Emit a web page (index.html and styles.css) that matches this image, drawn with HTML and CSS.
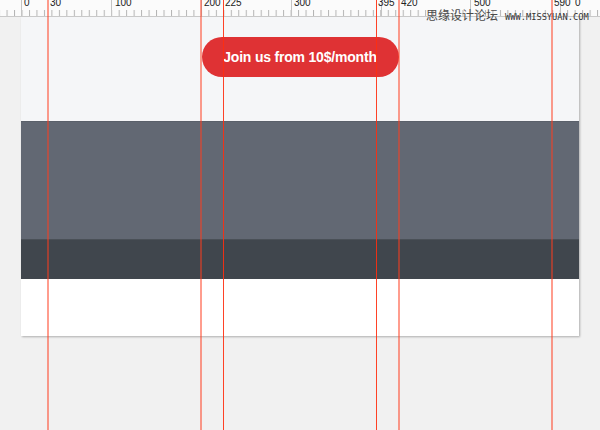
FILE: index.html
```html
<!DOCTYPE html>
<html lang="en">

<head>
    <meta charset="UTF-8">
    <title>Layout grid</title>
    <link rel="stylesheet" href="styles.css">
</head>

<body>
    <div class="ruler">
        <svg class="ruler-svg" width="600" height="17" viewBox="0 0 600 17">
            <defs>
                <pattern id="ticks" x="21.5" y="0" width="7.475" height="17" patternUnits="userSpaceOnUse">
                    <rect x="0" y="10" width="1" height="6" fill="#b4b4b4"></rect>
                </pattern>
            </defs>
            <rect x="0" y="0" width="600" height="16" fill="url(#ticks)"></rect>
            <g class="major" fill="#c4c4c4" shape-rendering="crispEdges">
                <rect x="21" y="0" width="1" height="16"></rect>
                <rect x="111" y="0" width="1" height="16"></rect>
                <rect x="201" y="0" width="1" height="16"></rect>
                <rect x="291" y="0" width="1" height="16"></rect>
                <rect x="381" y="0" width="1" height="16"></rect>
                <rect x="470" y="0" width="1" height="16"></rect>
                <rect x="560" y="0" width="1" height="16"></rect>
            </g>
            <g class="labels">
                <text x="24" y="6">0</text>
                <text x="50" y="6">30</text>
                <text x="115" y="6">100</text>
                <text x="204" y="6">200</text>
                <text x="225" y="6">225</text>
                <text x="294" y="6">300</text>
                <text x="378" y="6">395</text>
                <text x="401" y="6">420</text>
                <text x="474" y="6">500</text>
                <text x="554" y="6">590</text>
                <text x="575" y="6">0</text>
            </g>
        </svg>
        <div class="watermark">
            <span class="wm-cn">思缘设计论坛</span>
            <span class="wm-en">WWW.MISSYUAN.COM</span>
        </div>
    </div>

    <div class="stage">
        <div class="sheet">
            <div class="hero">
                <a class="join-btn">Join us from 10$/month</a>
            </div>
            <div class="band band-mid"></div>
            <div class="band band-dark"></div>
            <div class="band band-white"></div>
        </div>
    </div>

    <!-- guide lines lie over everything -->
    <div class="guides">
        <span class="guide soft g30"></span>
        <span class="guide soft g200"></span>
        <span class="guide hard g225"></span>
        <span class="guide hard g395"></span>
        <span class="guide soft g420"></span>
        <span class="guide soft g590"></span>
    </div>
</body>

</html>
```

FILE: styles.css
```css
* {
    margin: 0;
    padding: 0;
    box-sizing: border-box;
}

html,
body {
    height: 100%;
}

body {
    position: relative;
    overflow: hidden;
    background: #f1f1f1;
    font-family: "Liberation Sans", Arial, sans-serif;
}

/* ruler */
.ruler {
    position: relative;
    height: 17px;
    background: #fbfbfb;
    border-bottom: 1px solid #c9c9c9;
}

.ruler-svg {
    display: block;
}

.ruler-svg text {
    font-family: "Liberation Sans", Arial, sans-serif;
    font-size: 10px;
    fill: #222;
}

.watermark {
    position: absolute;
    left: 426px;
    top: 8px;
    display: flex;
    align-items: baseline;
    gap: 7px;
    color: #444;
    white-space: nowrap;
}

.wm-cn {
    font-family: "Noto Sans CJK SC", sans-serif;
    font-size: 12px;
    line-height: 14px;
    color: #4a4a4a;
}

.wm-en {
    font-family: "DejaVu Sans Mono", monospace;
    font-size: 8.7px;
    color: #333;
}

/* canvas */
.stage {
    padding-left: 21px;
}

.sheet {
    width: 558px;
    box-shadow: 1px 1px 2px rgba(0, 0, 0, .28);
    background: #fff;
}

.hero {
    height: 104px;
    padding-top: 20px;
    background: #f5f6f8;
    display: flex;
    justify-content: center;
    align-items: flex-start;
}

.join-btn {
    display: flex;
    align-items: center;
    justify-content: center;
    width: 197px;
    height: 40px;
    border-radius: 20px;
    background: #df3234;
    color: #fff;
    font-weight: bold;
    font-size: 14px;
    letter-spacing: -0.2px;
    cursor: pointer;
}

.band-mid {
    height: 118px;
    background: #626873;
    border-top: 1px solid #5a606a;
}

.band-dark {
    height: 40px;
    background: #40464d;
    border-top: 1px solid #4a5057;
}

.band-white {
    height: 57px;
    background: #fff;
}

/* guides */
.guides {
    position: absolute;
    top: 0;
    left: 0;
    right: 0;
    bottom: 0;
    pointer-events: none;
}

.guide {
    position: absolute;
    top: 0;
    bottom: 0;
}

.guide.soft {
    width: 2px;
    background: rgba(255, 60, 30, .5);
}

.guide.hard {
    width: 1px;
    background: rgba(255, 45, 15, .9);
}

.g30 {
    left: 47px;
}

.g200 {
    left: 200px;
}

.g225 {
    left: 223px;
}

.g395 {
    left: 376px;
}

.g420 {
    left: 398px;
}

.g590 {
    left: 551px;
}
```
